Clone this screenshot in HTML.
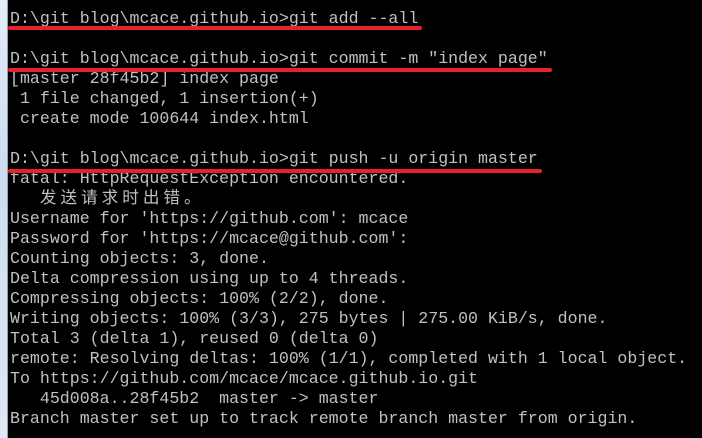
<!DOCTYPE html>
<html><head><meta charset="utf-8"><style>
html,body{margin:0;padding:0;background:#000;width:702px;height:438px;overflow:hidden}
.strip{position:absolute;left:0;top:0;width:7px;height:438px;background:linear-gradient(#e4ecf6,#cddcee 40%,#dfe8f3);border-right:1px solid #8aa0bb}
pre{position:absolute;left:10px;top:9px;margin:0;font-family:"Liberation Mono","Noto Sans CJK SC",monospace;font-size:16.6px;line-height:20px;color:#c0c0c0}
.c{letter-spacing:4px}
.u{position:absolute;left:8px;height:4px;background:#e8202a;border-radius:2px}
</style></head><body>
<div class="strip"></div>
<pre>D:\git blog\mcace.github.io>git add --all

D:\git blog\mcace.github.io>git commit -m "index page"
[master 28f45b2] index page
 1 file changed, 1 insertion(+)
 create mode 100644 index.html

D:\git blog\mcace.github.io>git push -u origin master
fatal: HttpRequestException encountered.
   <span class="c">发送请求时出错。</span>
Username for 'https://github.com': mcace
Password for 'https://mcace@github.com':
Counting objects: 3, done.
Delta compression using up to 4 threads.
Compressing objects: 100% (2/2), done.
Writing objects: 100% (3/3), 275 bytes | 275.00 KiB/s, done.
Total 3 (delta 1), reused 0 (delta 0)
remote: Resolving deltas: 100% (1/1), completed with 1 local object.
To https://github.com/mcace/mcace.github.io.git
   45d008a..28f45b2  master -> master
Branch master set up to track remote branch master from origin.</pre>
<div class="u" style="top:26px;width:414px"></div>
<div class="u" style="top:68px;width:544px"></div>
<div class="u" style="top:169px;width:534px"></div>
</body></html>
